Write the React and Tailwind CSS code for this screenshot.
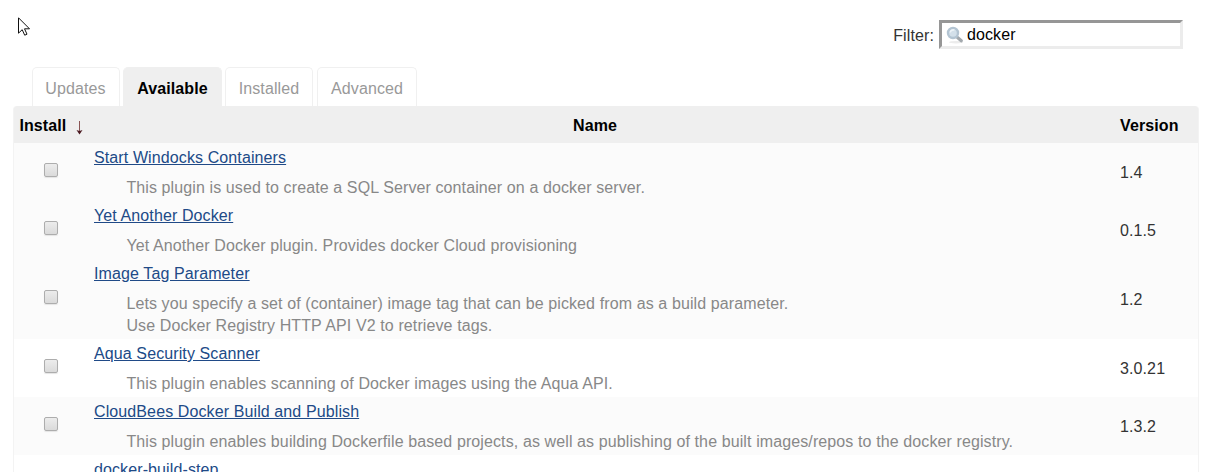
const tabs = [
  { label: 'Updates', width: 'w-[88px] pr-[1px]' },
  { label: 'Available', width: 'w-[99px]', active: true },
  { label: 'Installed', width: 'w-[88px]' },
  { label: 'Advanced', width: 'w-[100px]' },
];

const plugins = [
  { name: 'Start Windocks Containers', lines: ['This plugin is used to create a SQL Server container on a docker server.'], version: '1.4', shaded: true },
  { name: 'Yet Another Docker', lines: ['Yet Another Docker plugin. Provides docker Cloud provisioning'], version: '0.1.5', shaded: true },
  {
    name: 'Image Tag Parameter',
    lines: [
      'Lets you specify a set of (container) image tag that can be picked from as a build parameter.',
      'Use Docker Registry HTTP API V2 to retrieve tags.',
    ],
    version: '1.2',
    shaded: true,
  },
  { name: 'Aqua Security Scanner', lines: ['This plugin enables scanning of Docker images using the Aqua API.'], version: '3.0.21' },
  {
    name: 'CloudBees Docker Build and Publish',
    lines: ['This plugin enables building Dockerfile based projects, as well as publishing of the built images/repos to the docker registry.'],
    version: '1.3.2',
    shaded: true,
  },
  { name: 'docker-build-step', lines: [''], version: '' },
];

function Cursor() {
  return (
    <svg className="absolute left-[18px] top-[17px]" width="13" height="20" viewBox="0 0 13 20">
      <path d="M.5 .8V16.2L4.2 12.7L6.7 18.2L9 17.2L6.5 11.8H11.5Z" fill="#fff" stroke="#111" strokeWidth="1" />
    </svg>
  );
}

function Magnifier() {
  return (
    <svg className="shrink-0" width="18" height="18" viewBox="0 0 18 18">
      <ellipse cx="10" cy="16.2" rx="7" ry="1.2" fill="#ececec" />
      <path d="M11.5 11.5L15.3 14.8" stroke="#a3a9ae" strokeWidth="3.2" strokeLinecap="round" />
      <circle cx="7" cy="7" r="5" fill="#d3e0ea" stroke="#b3c4d2" strokeWidth="2.4" />
      <path d="M4.2 6.5A3 3 0 0 1 8.5 4.2" fill="none" stroke="#edf3f8" strokeWidth="1.5" />
    </svg>
  );
}

function Tab({ label, width, active }) {
  return (
    <div
      className={`${width} flex h-[39px] items-center justify-center rounded-t-[5px] border border-b-0 pt-[3px] ${
        active ? 'border-[#efefef] bg-[#efefef] font-bold text-black' : 'border-[#f0f0f0] bg-white text-[#999]'
      }`}
    >
      {label}
    </div>
  );
}

function PluginRow({ name, lines, version, shaded }) {
  return (
    <div className={`flex shrink-0 pt-1 pb-[2px] ${shaded ? 'bg-[#fbfbfb]' : 'bg-white'}`}>
      <div className="flex w-[80px] items-center pb-[7px] pl-[30px]">
        <span className="h-[14px] w-[14px] rounded-[2px] border border-[#adadad] bg-linear-to-b from-[#ececec] to-[#dadada] shadow-[0_1px_1px_#e4e4e4]" />
      </div>
      <div className="flex-1">
        <a className="text-[#204a87] underline">{name}</a>
        <div className="mt-2 pl-[32.4px] text-[#888]">
          {lines.map((line) => (
            <div key={line} className="min-h-[22px]">{line}</div>
          ))}
        </div>
      </div>
      <div className="flex w-[78px] items-center text-[#333]">{version}</div>
    </div>
  );
}

export default function App() {
  return (
    <div className="relative flex h-[472px] w-[1207px] flex-col overflow-hidden bg-white font-['Liberation_Sans',Arial,sans-serif] text-[16px] leading-[22px] tracking-[0.108px] whitespace-nowrap">
      <Cursor />
      <div className="flex h-[67px] shrink-0 items-start justify-end pr-[24px] pt-[20px]">
        <label className="mr-[5px] mt-[5px] text-[#333]">Filter:</label>
        <div className="flex h-[29px] w-[244px] items-center gap-[3px] border-[3px] border-b-[#ececec] border-l-[#969696] border-r-[#ececec] border-t-[#969696] bg-white pl-[4px] text-black">
          <Magnifier />
          <span>docker</span>
        </div>
      </div>
      <div className="flex shrink-0 pl-[32px]">
        <div className="flex gap-[3px]">
          {tabs.slice(0, 3).map((tab) => (
            <Tab key={tab.label} {...tab} />
          ))}
        </div>
        <div className="pl-[4px]">
          <Tab {...tabs[3]} />
        </div>
      </div>
      <div className="ml-[13px] flex w-[1186px] flex-col rounded-t-[4px] border border-t-0 border-[#f3f3f3]">
        <div className="flex h-[37px] shrink-0 items-center rounded-t-[3px] bg-[#efefef] pt-[2px] font-bold text-black">
          <div className="flex w-[80px] items-center pl-[5.4px]">
            Install
            <svg className="ml-[8.6px] mt-[4px]" width="9" height="14" viewBox="0 0 9 14">
              <path d="M4.5 0V11" stroke="#8a5555" strokeWidth="1" />
              <path d="M1.5 9L4.5 10L7.5 9L4.5 13.5Z" fill="#4a1820" />
            </svg>
          </div>
          <div className="flex-1 pr-[24px] text-center">Name</div>
          <div className="w-[78px]">Version</div>
        </div>
        {plugins.map((plugin) => (
          <PluginRow key={plugin.name} {...plugin} />
        ))}
      </div>
    </div>
  );
}
